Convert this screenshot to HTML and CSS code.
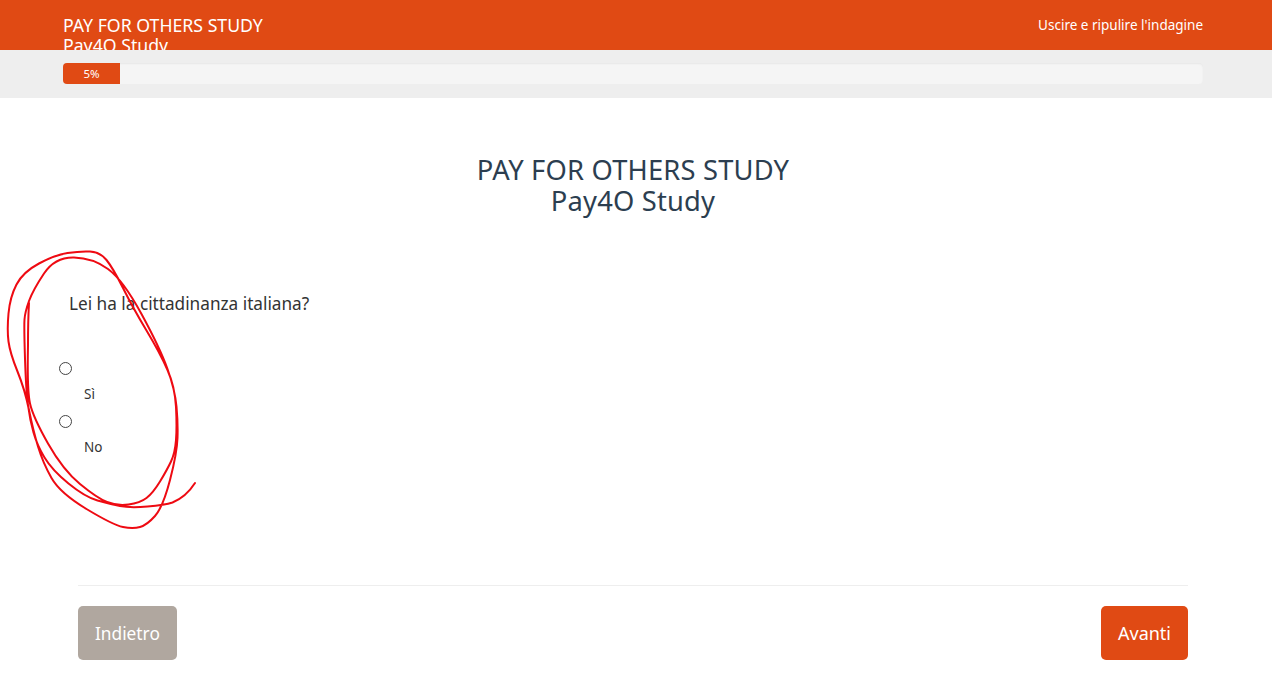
FILE: index.html
```html
<!DOCTYPE html>
<html lang="it">
<head>
    <meta charset="UTF-8">
    <meta name="viewport" content="width=device-width, initial-scale=1.0">
    <title>Pay4O Study</title>
    <link rel="stylesheet" href="styles.css">
</head>
<body>
<header class="topbar">
    <div class="survey-name">PAY FOR OTHERS STUDY<br>Pay4O Study</div>
    <a class="clear-link" href="#">Uscire e ripulire l'indagine</a>
</header>
<div class="progress-band">
    <div class="progress">
        <div class="progress-fill">5%</div>
    </div>
</div>
<main class="content">
    <h1 class="survey-title">PAY FOR OTHERS STUDY<br>Pay4O Study</h1>
    <form class="question">
        <p class="question-text">Lei ha la cittadinanza italiana?</p>
        <div class="answer">
            <input type="radio" name="cittadinanza" id="si">
            <label for="si">Sì</label>
        </div>
        <div class="answer">
            <input type="radio" name="cittadinanza" id="no">
            <label for="no">No</label>
        </div>
    </form>
    <div class="nav-buttons">
        <button type="button" class="btn btn-back">Indietro</button>
        <button type="button" class="btn btn-next">Avanti</button>
    </div>
</main>
<svg class="scribble" width="210" height="300" viewBox="0 240 210 300">
    <path d="M195 483 Q186 497 172.5 502.5 Q165 505 147.5 506.5 Q130 508 120 506 Q110 504 97.5 500.5 Q85 497 68.5 483.5 Q52 470 44.5 457.5 Q37 445 33.5 432.5 Q30 420 28 405 Q26 390 25 358.5 Q24 327 24.5 319.5 Q25 312 29 301 Q33 290 44 273.5 Q55 257 74 257.5 Q93 258 108 269 Q123 280 141.5 314 Q160 348 167.5 369 Q175 390 176.5 406.5 Q178 423 177.5 438 Q177 453 170 480 Q163 507 155 516 Q147 525 140 527 Q133 529 123 527 Q113 525 86.5 509 Q60 493 51.5 478 Q43 463 38 446.5 Q33 430 29 410 Q25 390 17.5 371.5 Q10 353 8.5 341.5 Q7 330 8.5 313.5 Q10 297 16.5 284.5 Q23 272 39 263.5 Q55 255 67.5 253 Q80 251 90 251.5 Q100 252 106.5 260 Q113 268 123 288 Q133 308 146.5 330.5 Q160 353 167.5 370 Q175 387 176 407 Q177 427 176 440 Q175 453 171 461.5 Q167 470 160 481.5 Q153 493 146.5 498 Q140 503 128.5 504.5 Q117 506 107 502 Q97 498 80 484 Q63 470 48 443.5 Q33 417 30 403.5 Q27 390 28 345 Q28 320 29 303"/>
</svg>
</body>
</html>
```
FILE: styles.css
```css
body {
    margin: 0;
    font-family: "Noto Sans", "Open Sans", sans-serif;
    color: #333;
    background-color: #fff;
}
.topbar {
    height: 50px;
    box-sizing: border-box;
    padding: 15px 69px 0 63px;
    background-color: #e04a14;
    color: #fff;
    display: flex;
    justify-content: space-between;
    align-items: flex-start;
    overflow: hidden;
}
.survey-name {
    font-size: 17.7px;
    line-height: 20px;
}
.clear-link {
    color: #fff;
    font-size: 13.5px;
    line-height: 20px;
    text-decoration: none;
}
.progress-band {
    height: 48px;
    box-sizing: border-box;
    padding: 13px 69px 0 63px;
    background-color: #eee;
}
.progress {
    height: 21px;
    border-radius: 4px;
    background-color: #f5f5f5;
    box-shadow: inset 0 1px 2px rgba(0, 0, 0, 0.06);
    overflow: hidden;
}
.progress-fill {
    width: 5%;
    height: 100%;
    background-color: #e04a14;
    color: #fff;
    font-size: 11.5px;
    line-height: 21px;
    text-align: center;
}
.content {
    padding: 0 84px 0 78px;
}
.survey-title {
    margin: 56px 0 0;
    font-size: 27.3px;
    font-weight: 400;
    letter-spacing: 0.2px;
    line-height: 31px;
    color: #2c3e50;
    text-align: center;
}
.question {
    margin: 0 0 0 -15px;
    height: 369px;
    box-sizing: border-box;
}
.question-text {
    margin: 0 0 47px;
    padding: 77px 0 0 6px;
    font-size: 17.2px;
    line-height: 22px;
    color: #333;
}
.answer {
    height: 53px;
}
.answer input {
    display: block;
    appearance: none;
    box-sizing: border-box;
    width: 13px;
    height: 13px;
    margin: 0 0 0 -4px;
    border: 1px solid #444;
    border-radius: 50%;
    background-color: #fff;
}
.answer label {
    display: block;
    margin: 9px 0 0 21px;
    font-size: 13.5px;
    line-height: 20px;
}
.nav-buttons {
    display: flex;
    justify-content: space-between;
    padding-top: 20px;
    border-top: 1px solid #eee;
}
.btn {
    height: 54px;
    padding: 0 17px;
    border: none;
    border-radius: 5px;
    color: #fff;
    font-family: inherit;
}
.btn-back {
    background-color: #b0a79f;
    font-size: 17.3px;
}
.btn-next {
    background-color: #e04a14;
    font-size: 18px;
}
.scribble {
    position: absolute;
    left: 0;
    top: 240px;
    pointer-events: none;
}
.scribble path {
    fill: none;
    stroke: #ee0a12;
    stroke-width: 2;
    stroke-linecap: round;
    stroke-linejoin: round;
}
```
